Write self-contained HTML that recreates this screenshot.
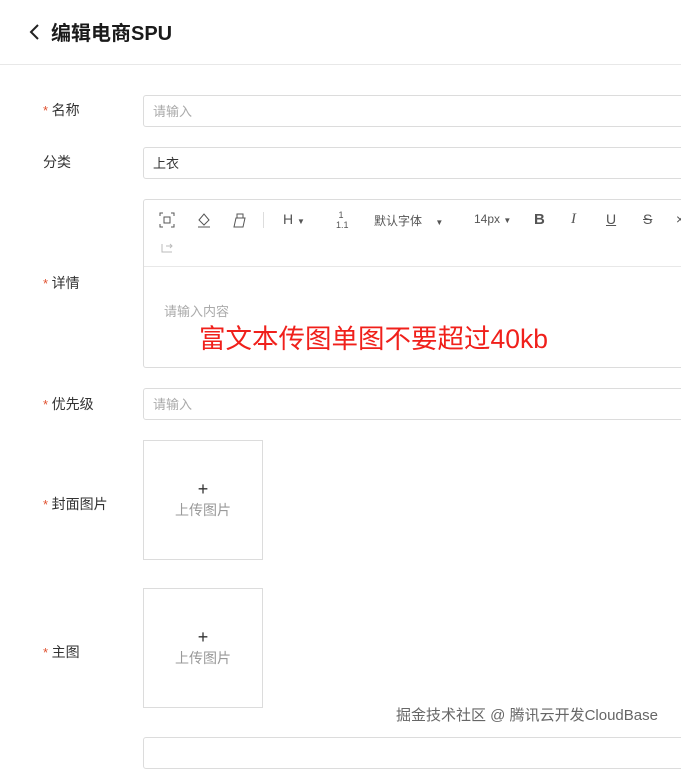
<!DOCTYPE html>
<html><head><meta charset="utf-8"><style>
*{margin:0;padding:0;box-sizing:border-box}
body{width:681px;height:742px;overflow:hidden;background:#fff;font-family:"Liberation Sans","Noto Sans CJK SC",sans-serif;position:relative;color:#333}
.abs{position:absolute}
.hdr{left:0;top:0;width:681px;height:65px;border-bottom:1px solid #e8e8e8}
.title{left:51px;top:17px;font-size:20px;font-weight:bold;color:#1a1a1a}
.lbl{font-size:14px;color:#333}
.star{color:#e0512f;font-size:13px}
.inp{left:143px;width:560px;height:32px;border:1px solid #dcdcdc;border-radius:3px;font-size:13px;color:#aaa;padding:5px 9px}
.up{left:143px;width:120px;height:120px;border:1px solid #dcdcdc;text-align:center;font-size:14px;color:#999}
.tb{font-size:12px;color:#555}
</style></head><body>
<div class="abs hdr"></div>
<svg class="abs" style="left:28px;top:23px" width="14" height="18"><path d="M10 2 L3 9 L10 16" stroke="#222" stroke-width="2" fill="none"/></svg>
<div class="abs title">编辑电商SPU</div>

<div class="abs lbl" style="left:43px;top:100px"><span class="star">* </span>名称</div>
<div class="abs inp" style="top:95px">请输入</div>
<div class="abs lbl" style="left:43px;top:152px">分类</div>
<div class="abs inp" style="top:147px;color:#333">上衣</div>

<div class="abs lbl" style="left:43px;top:273px"><span class="star">* </span>详情</div>
<div class="abs" style="left:143px;top:199px;width:560px;height:169px;border:1px solid #dcdcdc;border-radius:3px"></div>
<div class="abs" style="left:144px;top:266px;width:540px;height:1px;background:#e8e8e8"></div>
<svg class="abs" style="left:158px;top:211px" width="18" height="18"><path d="M2 5V2h3M13 2h3v3M16 13v3h-3M5 16H2v-3" stroke="#555" fill="none"/><rect x="6" y="6" width="6" height="6" stroke="#555" fill="none"/></svg>
<svg class="abs" style="left:195px;top:211px" width="18" height="18"><path d="M4 9l5-6 5 6-5 5z" stroke="#555" fill="none"/><path d="M3 16h12" stroke="#555"/></svg>
<svg class="abs" style="left:230px;top:211px" width="18" height="18"><path d="M4 16l2-9h9l-2 9zM7 7V3h6v4" stroke="#555" fill="none"/></svg>
<div class="abs" style="left:263px;top:212px;width:1px;height:16px;background:#ddd"></div>
<div class="abs tb" style="left:283px;top:211px;font-size:14px">H <span style="font-size:8px">▼</span></div>
<div class="abs tb" style="left:336px;top:210px;font-size:9px;line-height:10px">&nbsp;1<br>1.1</div>
<div class="abs tb" style="left:374px;top:212px">默认字体 &nbsp;&nbsp;&nbsp;<span style="font-size:8px">▼</span></div>
<div class="abs tb" style="left:474px;top:212px">14px <span style="font-size:8px">▼</span></div>
<div class="abs tb" style="left:534px;top:211px;font-size:15px;font-weight:bold">B</div>
<div class="abs tb" style="left:571px;top:211px;font-size:15px;font-style:italic;font-family:'Liberation Serif',serif">I</div>
<div class="abs tb" style="left:606px;top:211px;font-size:14px;text-decoration:underline">U</div>
<div class="abs tb" style="left:643px;top:211px;font-size:14px;text-decoration:line-through">S</div>
<div class="abs tb" style="left:676px;top:211px;font-size:14px">×</div>
<svg class="abs" style="left:160px;top:240px" width="14" height="14"><path d="M2 4v8h10M6 6h6M10 4l2 2-2 2" stroke="#bbb" fill="none"/></svg>
<div class="abs" style="left:164px;top:301px;font-size:13px;color:#aaa">请输入内容</div>
<div class="abs" style="left:199px;top:317px;font-size:26.5px;color:#f0201b">富文本传图单图不要超过40kb</div>

<div class="abs lbl" style="left:43px;top:394px"><span class="star">* </span>优先级</div>
<div class="abs inp" style="top:388px">请输入</div>

<div class="abs lbl" style="left:43px;top:494px"><span class="star">* </span>封面图片</div>
<div class="abs up" style="top:440px"><div style="margin-top:38px;font-size:18px;color:#333;line-height:20px">+</div><div style="margin-top:1px">上传图片</div></div>
<div class="abs lbl" style="left:43px;top:642px"><span class="star">* </span>主图</div>
<div class="abs up" style="top:588px"><div style="margin-top:38px;font-size:18px;color:#333;line-height:20px">+</div><div style="margin-top:1px">上传图片</div></div>
<div class="abs inp" style="top:737px"></div>
<div class="abs" style="left:396px;top:704px;font-size:15px;color:#666">掘金技术社区 @ 腾讯云开发CloudBase</div>
</body></html>
